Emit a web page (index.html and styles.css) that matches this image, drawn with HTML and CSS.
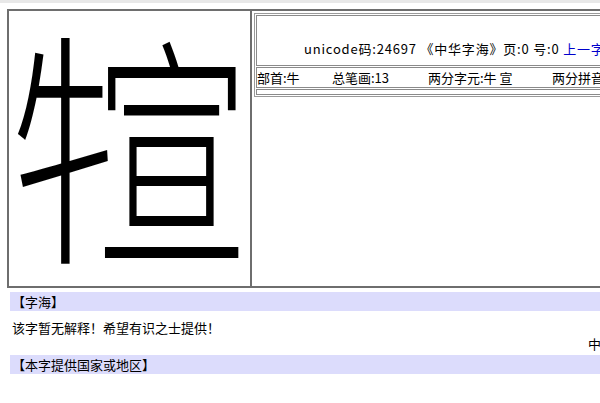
FILE: index.html
```html
<!DOCTYPE html>
<html lang="zh">
<head>
<meta charset="utf-8">
<title>字海</title>
<link rel="stylesheet" href="styles.css">
</head>
<body>
<div class="topstrip"></div>
<div class="frame">
  <div class="glyph-cell">
    <svg class="glyph" viewBox="0 0 241 275" width="241" height="275">
      <text class="g-left" x="0" y="0" transform="translate(-30 234) scale(0.67 0.96)">牜</text>
      <text class="g-right" x="0" y="0" transform="translate(86 235) scale(0.595 0.944)">宣</text>
    </svg>
  </div>
  <div class="info-cell">
    <div class="info-table">
      <div class="row row-head">unicode码:24697 《中华字海》页:0 号:0 <a class="link" href="#">上一字</a> <a class="link" href="#">下一字</a></div>
      <div class="row row-meta">
        <span>部首:牛</span>
        <span>总笔画:13</span>
        <span>两分字元:牛 宣</span>
        <span>两分拼音:niu xuan</span>
      </div>
      <div class="row row-empty"></div>
    </div>
  </div>
</div>
<div class="content">
  <div class="bar">【字海】</div>
  <p class="desc">该字暂无解释！希望有识之士提供！</p>
  <p class="source">中华字海</p>
  <div class="bar">【本字提供国家或地区】</div>
</div>
</body>
</html>
```
FILE: styles.css
```css
html, body {
  margin: 0;
  padding: 0;
  overflow: hidden;
  background: #fff;
}
body {
  font-family: "Noto Sans CJK SC", "Noto Sans", sans-serif;
  font-size: 13px;
  color: #000;
  width: 760px;
}
.topstrip {
  height: 3px;
  background: #e8e8e8;
}
.frame {
  display: flex;
  margin: 6px 0 0 7px;
  width: 740px;
  border-top: 2px solid #6e6e6e;
  border-left: 2px solid #6e6e6e;
  border-bottom: 2px solid #6e6e6e;
}
.glyph-cell {
  width: 241px;
  height: 275px;
  border-right: 2px solid #6e6e6e;
  flex: none;
  overflow: hidden;
}
.glyph {
  display: block;
}
.glyph text {
  font-family: "Noto Sans CJK SC", sans-serif;
  font-size: 258px;
  font-weight: 300;
  fill: #000;
}
.info-cell {
  flex: 1;
  padding: 2px 0 0 2px;
}
.info-table {
  display: flex;
  flex-direction: column;
  gap: 1px;
  border: 1px solid #9a9a9a;
  padding: 1px;
  width: 480px;
}
.row {
  box-sizing: border-box;
  border: 1px solid #8a8a8a;
  white-space: nowrap;
}
.row-head {
  height: 51px;
  padding: 25px 0 0 47px;
  line-height: 16px;
  letter-spacing: 0.8px;
}
.link {
  color: #0000cc;
  text-decoration: none;
}
.row-meta {
  height: 21px;
  line-height: 19px;
  display: grid;
  grid-template-columns: 75px 96px 124px auto;
}
.row-empty {
  height: 6px;
}
.content {
  margin: 4px 0 0 10px;
  width: 630px;
}
.bar {
  background: #dcdcfc;
  height: 19px;
  line-height: 19px;
  padding-left: 2px;
}
.desc {
  margin: 9px 0 0;
  padding-left: 2px;
  line-height: 16px;
}
.source {
  margin: 0;
  text-align: right;
  line-height: 16px;
  margin-bottom: 3px;
}
```
